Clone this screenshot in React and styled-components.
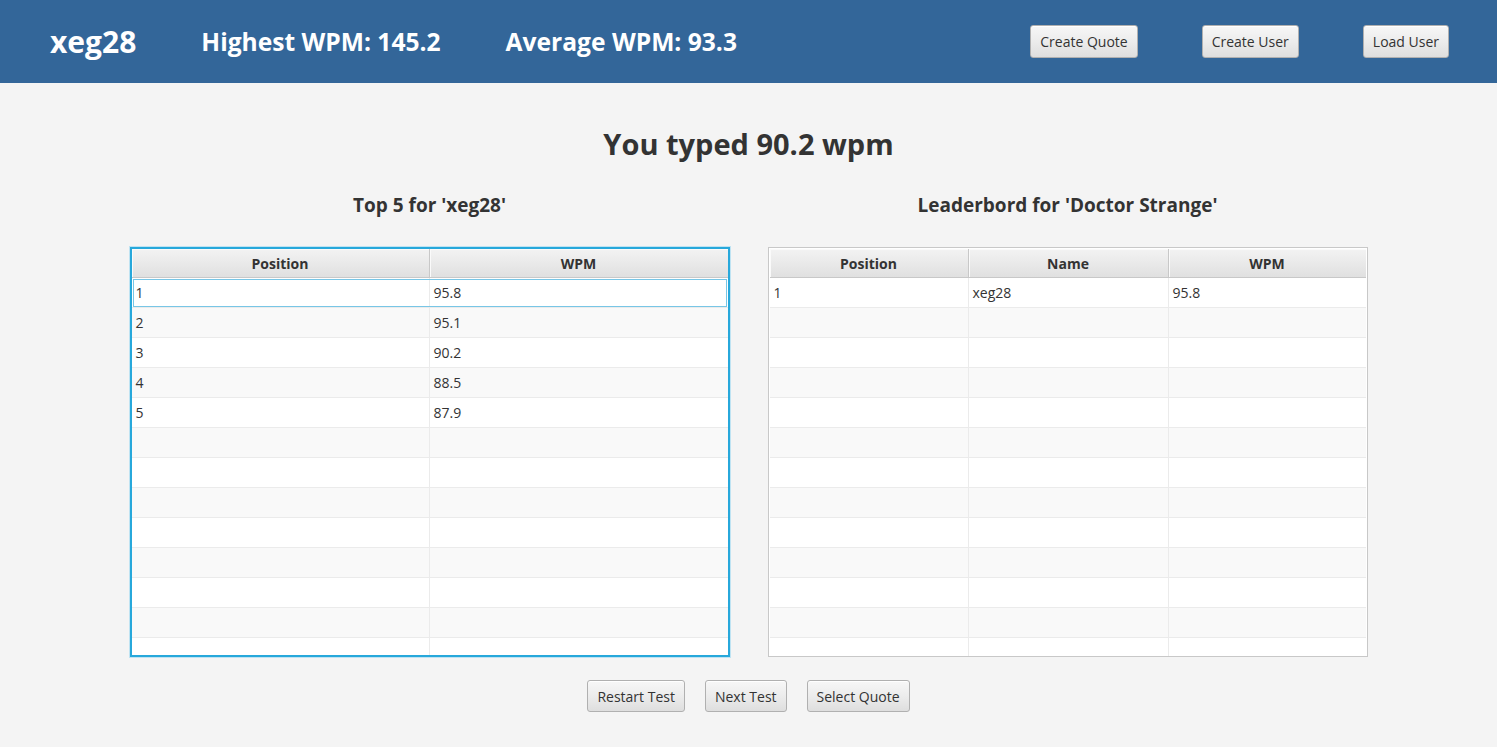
import React from 'react';
import styled, { createGlobalStyle } from 'styled-components';

const GlobalStyle = createGlobalStyle`
  html, body {
    margin: 0;
    padding: 0;
    background: #f4f4f4;
    font-family: 'Open Sans', 'Noto Sans', sans-serif;
  }
`;

const Page = styled.div`
  width: 100%;
  min-height: 747px;
  background: #f4f4f4;
  display: flex;
  flex-direction: column;
`;

const TopBar = styled.header`
  height: 83px;
  background: #336699;
  display: flex;
  align-items: center;
  padding: 0 48px 0 50px;
  box-sizing: border-box;
  color: #fff;
`;

const UserName = styled.div`
  font-size: 30px;
  font-weight: 700;
  margin-right: 65px;
`;

const Stat = styled.div`
  font-size: 24.6px;
  font-weight: 700;
  margin-right: 65px;
`;

const BarActions = styled.div`
  margin-left: auto;
  display: flex;
  gap: 64px;
  margin-top: -1px;
`;

const Button = styled.button`
  font-family: 'Open Sans', 'Noto Sans', sans-serif;
  font-size: 14px;
  color: #333;
  height: ${p => (p.$tall ? '33px' : '32px')};
  padding: 0 9px;
  border: 1px solid #b0b0b0;
  border-radius: 3px;
  background: linear-gradient(to bottom, #f7f7f7 0%, #ececec 50%, #dedede 100%);
  box-shadow: inset 0 1px 0 #ffffff;
  cursor: pointer;
`;

const Content = styled.main`
  display: flex;
  flex-direction: column;
  align-items: center;
  padding-top: 44px;
`;

const Result = styled.h1`
  margin: 0;
  font-size: 29px;
  line-height: 34px;
  font-weight: 700;
  color: #333;
`;

const Boards = styled.div`
  display: flex;
  gap: 38px;
  margin-top: 32px;
`;

const Board = styled.section`
  width: 600px;
  display: flex;
  flex-direction: column;
  align-items: center;
`;

const BoardTitle = styled.h2`
  margin: 0 0 30px;
  font-size: 19px;
  line-height: 24px;
  font-weight: 700;
  color: #333;
`;

const TableBox = styled.div`
  width: 600px;
  height: 410px;
  box-sizing: border-box;
  overflow: hidden;
  background: #fff;
  border: ${p => (p.$focused ? '2px solid #27a8db' : '1px solid #c8c8c8')};
  padding: ${p => (p.$focused ? '0' : '1px')};
  box-shadow: ${p => (p.$focused ? '0 0 0 1px #bfe3f2' : 'none')};
`;

const Grid = styled.div`
  display: grid;
  grid-template-columns: ${p => p.$cols};
`;

const HeadCell = styled.div`
  height: 29px;
  box-sizing: border-box;
  display: flex;
  align-items: center;
  justify-content: center;
  font-size: 14px;
  font-weight: 700;
  color: #333;
  background: linear-gradient(to bottom, #f3f3f3 0%, #e0e0e0 100%);
  border-right: 1px solid #c8c8c8;
  border-bottom: 1px solid #c8c8c8;
  box-shadow: inset 1px 1px 0 #fafafa;
  &:last-child {
    border-right: none;
  }
`;

const Row = styled.div`
  display: grid;
  grid-template-columns: ${p => p.$cols};
  height: 30px;
  box-sizing: border-box;
  background: ${p => (p.$odd ? '#f9f9f9' : '#ffffff')};
  border-bottom: 1px solid #ebebeb;
  outline: ${p => (p.$selected ? '1px solid #78c6e6' : 'none')};
  outline-offset: -2px;
`;

const Cell = styled.div`
  display: flex;
  align-items: center;
  padding-left: 4px;
  font-size: 14px;
  color: #333;
  border-right: 1px solid #ebebeb;
  &:last-child {
    border-right: none;
  }
`;

const Footer = styled.div`
  display: flex;
  gap: 20px;
  margin-top: 23px;
`;

function Table({ columns, cols, rows, focused }) {
  const lines = Array.from({ length: 13 }, (_, i) => rows[i] || columns.map(() => ''));
  return (
    <TableBox $focused={focused}>
      <Grid $cols={cols}>
        {columns.map(c => (
          <HeadCell key={c}>{c}</HeadCell>
        ))}
      </Grid>
      {lines.map((r, i) => (
        <Row key={i} $cols={cols} $odd={i % 2 === 1} $selected={focused && i === 0}>
          {r.map((v, j) => (
            <Cell key={j}>{v}</Cell>
          ))}
        </Row>
      ))}
    </TableBox>
  );
}

const personal = [
  ['1', '95.8'],
  ['2', '95.1'],
  ['3', '90.2'],
  ['4', '88.5'],
  ['5', '87.9'],
];

const leaders = [['1', 'xeg28', '95.8']];

export default function App() {
  return (
    <Page>
      <GlobalStyle />
      <TopBar>
        <UserName>xeg28</UserName>
        <Stat>Highest WPM: 145.2</Stat>
        <Stat>Average WPM: 93.3</Stat>
        <BarActions>
          <Button $tall>Create Quote</Button>
          <Button $tall>Create User</Button>
          <Button $tall>Load User</Button>
        </BarActions>
      </TopBar>
      <Content>
        <Result>You typed 90.2 wpm</Result>
        <Boards>
          <Board>
            <BoardTitle>Top 5 for 'xeg28'</BoardTitle>
            <Table focused columns={['Position', 'WPM']} cols="298px 298px" rows={personal} />
          </Board>
          <Board>
            <BoardTitle>Leaderbord for 'Doctor Strange'</BoardTitle>
            <Table columns={['Position', 'Name', 'WPM']} cols="199px 200px 197px" rows={leaders} />
          </Board>
        </Boards>
        <Footer>
          <Button>Restart Test</Button>
          <Button>Next Test</Button>
          <Button>Select Quote</Button>
        </Footer>
      </Content>
    </Page>
  );
}
